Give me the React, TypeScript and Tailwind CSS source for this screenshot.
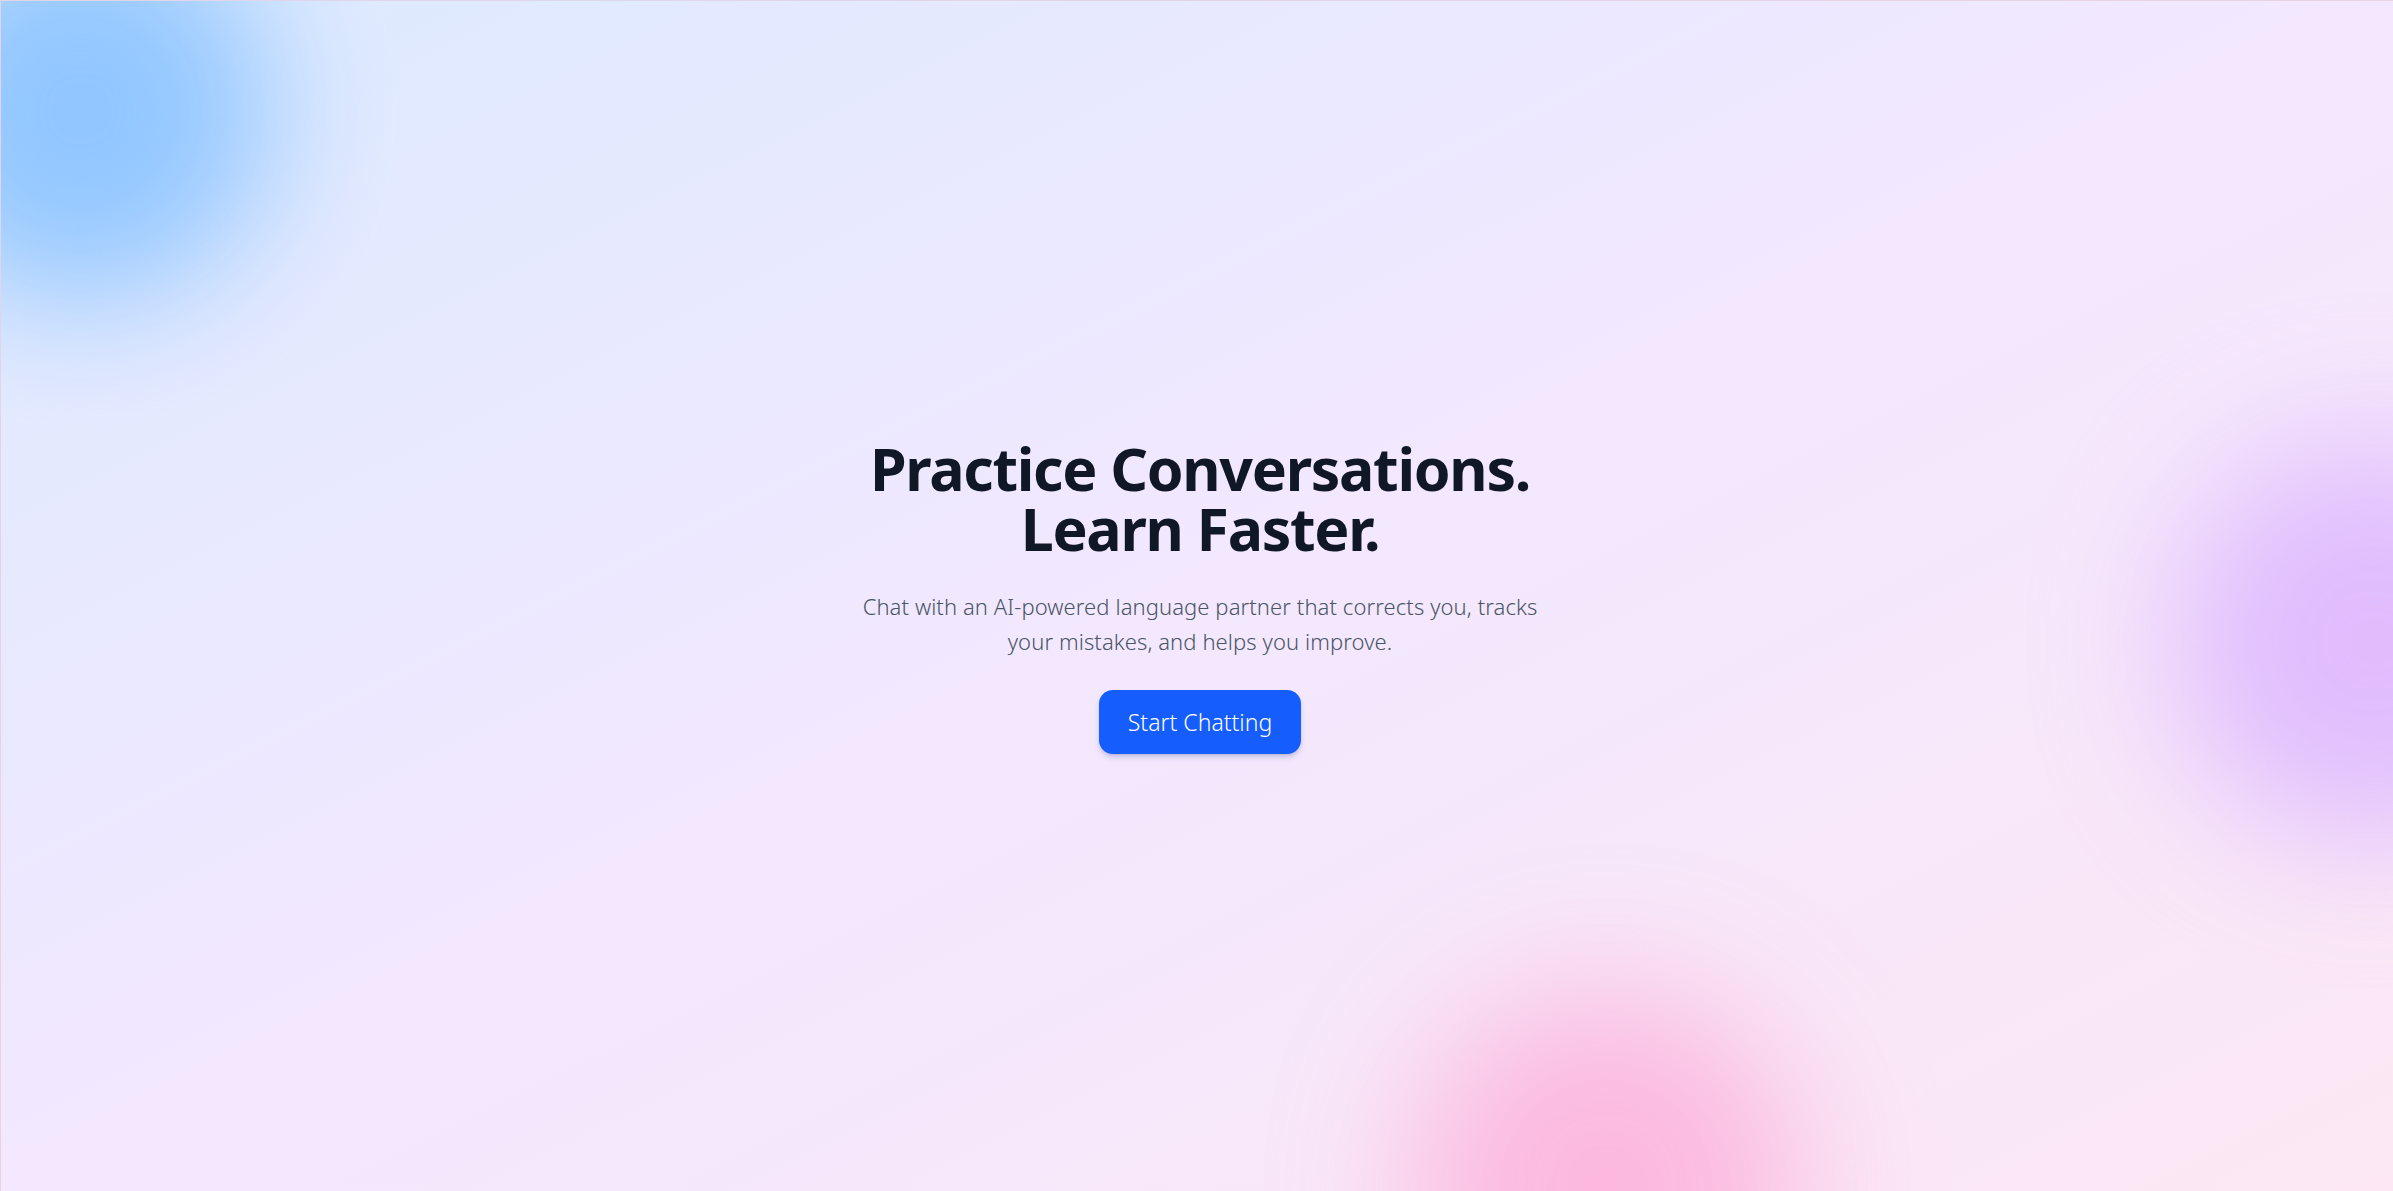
export default function App() {
  return (
    <div
      className="relative flex h-screen w-full items-center justify-center overflow-hidden border-t border-l border-black/[0.08] bg-gradient-to-br from-blue-100 via-purple-100 to-pink-100 pl-[6px]"
      style={{ fontFamily: '"Noto Sans", "Open Sans", sans-serif' }}
    >
      {/* background blobs */}
      <div className="pointer-events-none absolute -left-[110px] -top-[80px] h-[380px] w-[380px] rounded-full bg-blue-300 opacity-95 blur-[65px]" />
      <div className="pointer-events-none absolute -right-[180px] top-[440px] h-[400px] w-[400px] rounded-full bg-purple-300 opacity-80 blur-[70px]" />
      <div className="pointer-events-none absolute -bottom-[190px] left-[1410px] h-[390px] w-[390px] rounded-full bg-pink-300 opacity-70 blur-[70px]" />

      <main className="relative z-10 flex flex-col items-center text-center">
        <h1 className="text-[59px] font-bold leading-[60px] tracking-[-0.022em] text-gray-900">
          Practice Conversations.
          <br />
          Learn Faster.
        </h1>
        <p className="mt-[31px] max-w-[740px] text-[22px] font-light leading-[35px] tracking-[0.004em] text-gray-600">
          Chat with an AI-powered language partner that corrects you, tracks
          <br />
          your mistakes, and helps you improve.
        </p>
        <button className="mt-[31px] h-[64px] rounded-[14px] bg-blue-600 px-[29px] text-[23px] font-light text-white shadow-md shadow-blue-900/20 hover:bg-blue-700">
          Start Chatting
        </button>
      </main>
    </div>
  );
}
